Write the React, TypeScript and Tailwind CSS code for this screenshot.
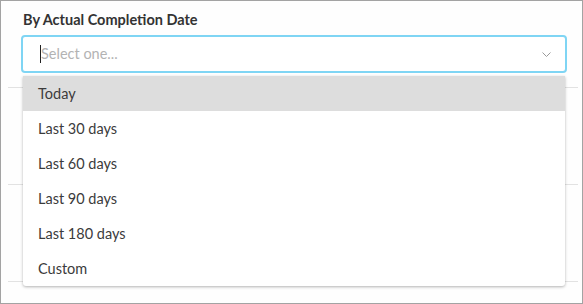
import React from 'react';

const options = ['Today', 'Last 30 days', 'Last 60 days', 'Last 90 days', 'Last 180 days', 'Custom'];

export default function App() {
  return (
    <div className="relative w-[583px] h-[304px] overflow-hidden border border-[#a3a3a3] bg-[#fefefe] font-['Lato',sans-serif] text-[#333]">
      <div className="pl-[20px] pr-[15px] pt-[10px]">
        <label className="ml-[2px] block text-[14.5px] font-bold leading-[18px] text-[#333]">By Actual Completion Date</label>
        <div className="mt-[6px] flex h-[38px] items-center rounded-[4px] border-2 border-[#7fd5f4] bg-white pl-[17px] pr-[14px]">
          <span className="h-[18px] w-px bg-[#222]" />
          <span className="flex-1 text-[14.5px] text-[#b3b3b3]">Select one...</span>
          <svg width="9" height="5" viewBox="0 0 9 5" fill="none">
            <path d="M0.5 0.5 L4.5 4.5 L8.5 0.5" stroke="#9a9a9a" strokeWidth="1" />
          </svg>
        </div>
      </div>

      {/* rows behind the open menu */}
      <div className="ml-[7px] mr-[4px] mt-[14px]">
        <div className="h-[97px] border-t border-[#e2e2e2]" />
        <div className="h-[97px] border-t border-[#e2e2e2]" />
        <div className="h-[20px] border-t border-[#e2e2e2]" />
      </div>

      <ul className="absolute left-[22px] top-[75px] w-[542px] rounded-b-[3px] bg-white shadow-[0_1px_3px_rgba(0,0,0,0.3)]">
        {options.map((o, i) => (
          <li
            key={o}
            className={`flex h-[35px] items-center pl-[15px] text-[14.5px] text-[#3b3b3b] ${i === 0 ? 'bg-[#dddddd]' : ''}`}
          >
            {o}
          </li>
        ))}
      </ul>
    </div>
  );
}
